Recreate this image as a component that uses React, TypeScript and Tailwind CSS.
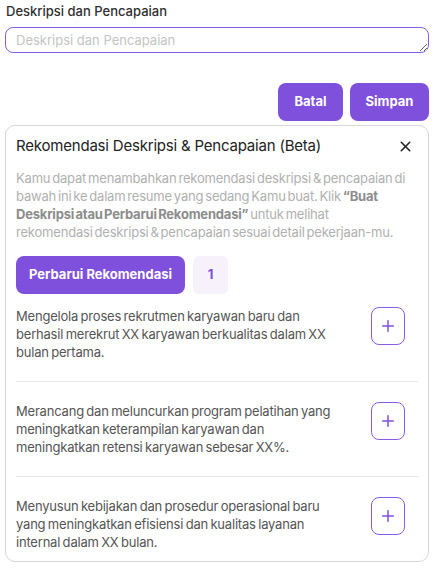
import { X, Plus } from 'lucide-react';

const recommendations = [
  'Mengelola proses rekrutmen karyawan baru dan berhasil merekrut XX karyawan berkualitas dalam XX bulan pertama.',
  'Merancang dan meluncurkan program pelatihan yang meningkatkan keterampilan karyawan dan meningkatkan retensi karyawan sebesar XX%.',
  'Menyusun kebijakan dan prosedur operasional baru yang meningkatkan efisiensi dan kualitas layanan internal dalam XX bulan.',
];

const App = () => {
  return (
    <div className="min-h-screen bg-white pl-[5px] pr-[4px] pt-[2px] font-['Inter',sans-serif]">
      <label className="block pl-[1px] text-[13px] leading-[18px] font-medium text-[#2f2f2f]">
        Deskripsi dan Pencapaian
      </label>

      <textarea
        rows={1}
        placeholder="Deskripsi dan Pencapaian"
        className="mt-[7px] block h-[26px] w-full rounded-lg border border-[#8a5ce6] px-[10px] py-[3px] text-[13px] leading-[18px] text-[#333] placeholder:text-[#c4c4c4] outline-none"
      />

      <div className="mt-[30px] flex justify-end gap-[7px]">
        <button className="h-[38px] w-[65px] rounded-lg bg-[#7f50dc] text-[13px] font-bold text-white">
          Batal
        </button>
        <button className="h-[38px] w-[79px] rounded-lg bg-[#7f50dc] text-[13px] font-bold text-white">
          Simpan
        </button>
      </div>

      <div className="mt-[4px] rounded-[10px] border border-[#d6d6d6] px-[10px] pt-[10px] pb-[10px]">
        <div className="flex items-center justify-between">
          <h2 className="text-[15px] leading-[20px] tracking-[-0.2px] text-[#222]">
            Rekomendasi Deskripsi &amp; Pencapaian (Beta)
          </h2>
          <X size={17} strokeWidth={2.2} className="mr-[4px] text-[#222]" />
        </div>

        <p className="mt-[13px] pr-[12px] text-[13px] leading-[18px] tracking-[-0.2px] [word-spacing:-1.5px] text-[#b0b0b0]">
          Kamu dapat menambahkan rekomendasi deskripsi &amp; pencapaian di bawah ini ke dalam resume yang sedang Kamu buat. Klik{' '}
          <span className="font-bold text-[#8c8c8c]">“Buat Deskripsi atau Perbarui Rekomendasi”</span>{' '}
          untuk melihat rekomendasi deskripsi &amp; pencapaian sesuai detail pekerjaan-mu.
        </p>

        <div className="mt-[15px] flex gap-[8px]">
          <button className="h-[38px] w-[169px] rounded-lg bg-[#7f50dc] text-[13px] font-bold text-white">
            Perbarui Rekomendasi
          </button>
          <div className="flex h-[38px] w-[35px] items-center justify-center rounded-md bg-[#f6f1fb] text-[13px] font-bold text-[#7f50dc]">
            1
          </div>
        </div>

        <div className="mt-[13px] divide-y divide-[#e6e6e6]">
          {recommendations.map((text, i) => (
            <div
              key={i}
              className={`flex items-start justify-between ${i === 0 ? 'pt-0' : 'pt-[20px]'} ${
                i === recommendations.length - 1 ? 'pb-0' : 'pb-[20px]'
              }`}
            >
              <p className="flex-1 pr-[22px] text-[13px] leading-[18px] tracking-[-0.2px] [word-spacing:-1px] text-[#555]">
                {text}
              </p>
              <button className="mr-[13px] flex h-[38px] w-[34px] shrink-0 items-center justify-center rounded-lg border border-[#8a5ce6] text-[#7f50dc]">
                <Plus size={18} strokeWidth={2} />
              </button>
            </div>
          ))}
        </div>
      </div>
    </div>
  );
};

export default App;
